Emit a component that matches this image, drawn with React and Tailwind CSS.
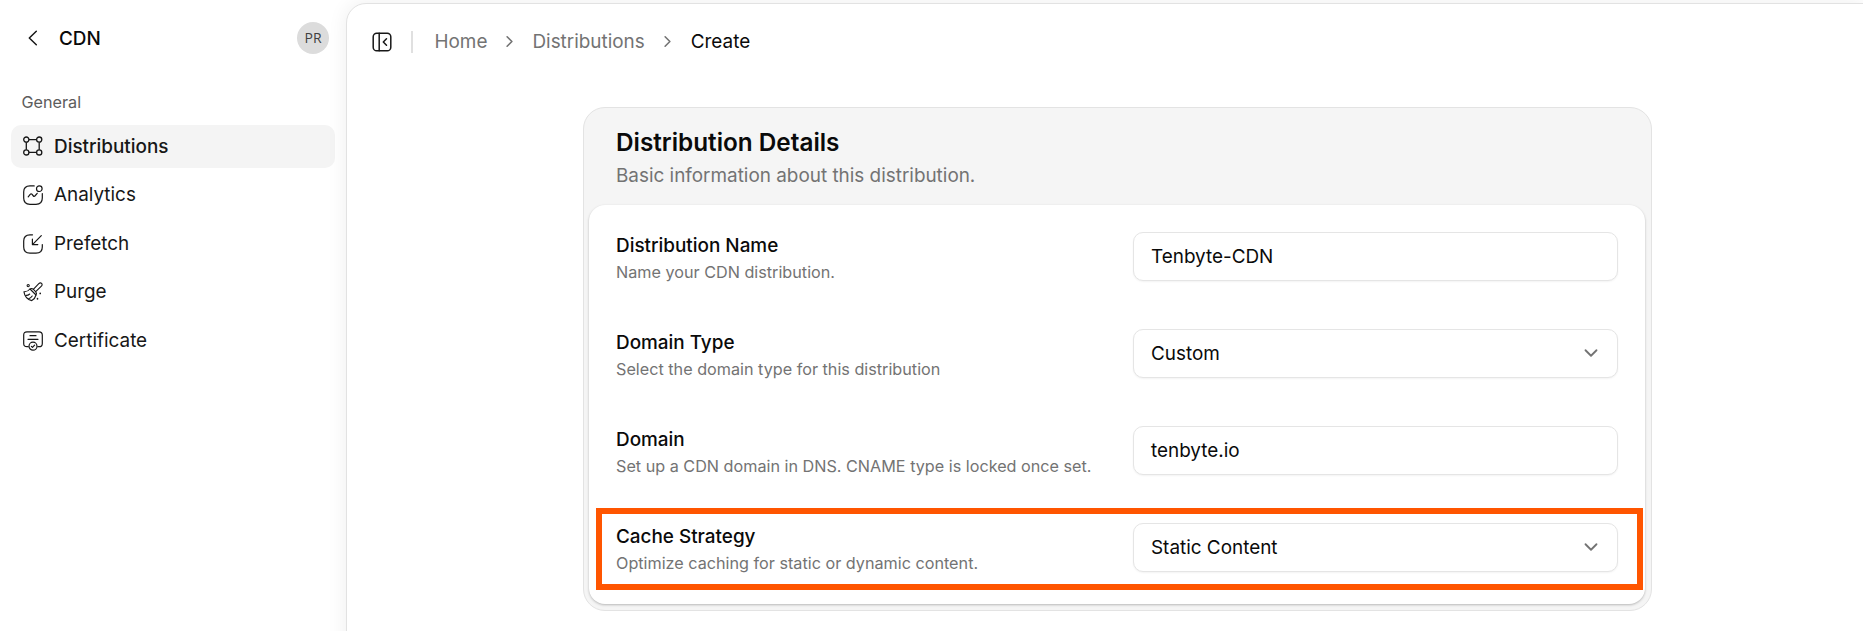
import { ChevronDown, ChevronRight } from "lucide-react";

const DistributionIcon = () => (
  <svg viewBox="0 0 20 20" className="-mt-px size-5 shrink-0" fill="none" stroke="currentColor" strokeWidth="1.3">
    <circle cx="3.3" cy="3.6" r="2.6" />
    <circle cx="16.2" cy="3.6" r="2.6" />
    <circle cx="3.3" cy="16.4" r="2.6" />
    <circle cx="16.2" cy="16.4" r="2.6" />
    <path d="M5.9 3.6h7.7M5.9 16.4h7.7M3.3 6.2v7.6M16.2 6.2v7.6" />
  </svg>
);

const AnalyticsIcon = () => (
  <svg viewBox="0 0 20 20" className="size-5 shrink-0" fill="none" stroke="currentColor" strokeWidth="1.2" strokeLinecap="round" strokeLinejoin="round">
    <path d="M11.2.9H7C2.800.9.7 3 .7 7v6c0 4.200 2.100 6.300 6.300 6.300h6c4.200 0 6.300-2.100 6.300-6.300V8.600" />
    <circle cx="16.3" cy="3.7" r="2.8" />
    <path d="m5.2 11.8 2.2-2.6c.4-.5 1.1-.5 1.5 0l1.5 1.8c.4.5 1.1.5 1.5 0l2.3-2.7" />
  </svg>
);

const PrefetchIcon = () => (
  <svg viewBox="0 0 20 20" className="size-5 shrink-0" fill="none" stroke="currentColor" strokeWidth="1.2" strokeLinecap="round" strokeLinejoin="round">
    <path d="M9.500.8H7C2.800.8.7 2.900.7 7v6c0 4.200 2.100 6.200 6.300 6.200h6c4.200 0 6.300-2 6.300-6.200v-2.500" />
    <path d="M18.300 1.700 9.700 10.300M9.400 5.200v5.400h5.400" />
  </svg>
);

const PurgeIcon = () => (
  <svg viewBox="0 0 20 20" className="size-5 shrink-0" fill="none" stroke="currentColor" strokeWidth="1.1" strokeLinecap="round" strokeLinejoin="round">
    <path d="m10.300 7.300 5.500-5.700c.9-.9 2.100-.9 2.800-.2s.7 1.900-.2 2.800l-5.700 5.500" />
    <path d="M7 7c1.200-.7 2.400-.5 3.400.4l2.200 2.200c1 1 1.200 2.200.4 3.400z" />
    <path d="M7 7C5.300 9 3.200 9.900.9 9.700c.7 4.700 3.300 7.900 7.900 8.900 2.100-1.100 3.600-3.100 4.200-5.600M3.200 13.400c1.400 0 2.500-.5 3.500-1.400M5.700 16.700c1.500-.5 2.700-1.400 3.500-2.700" />
    <circle cx="5.200" cy="3.600" r="1.100" />
    <path d="M17.200 11.400v.1M14.500 16.700v.1" strokeWidth="1.700" />
  </svg>
);

const CertificateIcon = () => (
  <svg viewBox="0 0 20 20" className="size-5 shrink-0" fill="none" stroke="currentColor" strokeWidth="1.2" strokeLinecap="round" strokeLinejoin="round">
    <path d="M5.200 15.700H4c-2.300 0-3.300-1-3.300-3.300V4.100C.7 1.800 1.700.8 4 .8h12c2.300 0 3.300 1 3.300 3.300v8.300c0 2.300-1 3.300-3.300 3.300h-1.200" />
    <path d="M7 4.700h6M5 8.300h10" />
    <circle cx="10" cy="15.200" r="4" />
    <path d="m8.400 15.300 1.100 1.100 2.100-2.200" />
  </svg>
);

const PanelIcon = () => (
  <svg viewBox="0 0 20 20" className="size-5 shrink-0" fill="none" stroke="currentColor" strokeWidth="1.500" strokeLinecap="round" strokeLinejoin="round">
    <rect x="1.200" y="1.200" width="17.600" height="17.600" rx="3.600" />
    <path d="M7.200 1.200v17.600M14.500 6.800 11.300 10l3.200 3.200" />
  </svg>
);

const NAV = [
  { label: "Distributions", Icon: DistributionIcon, active: true },
  { label: "Analytics", Icon: AnalyticsIcon },
  { label: "Prefetch", Icon: PrefetchIcon },
  { label: "Purge", Icon: PurgeIcon },
  { label: "Certificate", Icon: CertificateIcon },
];

const FIELDS = [
  { label: "Distribution Name", hint: "Name your CDN distribution.", value: "Tenbyte-CDN" },
  { label: "Domain Type", hint: "Select the domain type for this distribution", value: "Custom", select: true },
  { label: "Domain", hint: "Set up a CDN domain in DNS. CNAME type is locked once set.", value: "tenbyte.io" },
  { label: "Cache Strategy", hint: "Optimize caching for static or dynamic content.", value: "Static Content", select: true, highlighted: true },
];

function Sidebar() {
  return (
    <aside className="w-[346px] shrink-0 px-[11px]">
      <header className="flex h-[76px] items-center pr-[6px] pl-[17px]">
        <svg viewBox="0 0 10 16" className="h-4 w-2.5" fill="none" stroke="#171717" strokeWidth="1.500" strokeLinecap="round" strokeLinejoin="round">
          <path d="M8.300 1.200 1.300 8l7 6.800" />
        </svg>
        <h1 className="ml-[21px] pt-[2px] text-[18.900px] font-medium text-[#0a0a0a]">CDN</h1>
        <span className="ml-auto flex size-8 items-center justify-center rounded-full bg-[#dcdcdc] pb-px font-['Open_Sans',sans-serif] text-[14px] text-[#404040]">PR</span>
      </header>
      <p className="flex h-[49px] items-center pt-[4px] pl-[10.500px] text-[16.200px] text-[#5c5c5c]">General</p>
      <nav className="flex flex-col gap-[5.500px]">
        {NAV.map(({ label, Icon, active }) => (
          <a key={label} className={`flex h-[43px] items-center gap-[11px] rounded-[10px] pl-3 text-[18.900px] text-[#171717] ${active ? "bg-[#f4f4f4] font-medium" : ""}`}>
            <Icon />
            <span className="pb-px leading-[27px]">{label}</span>
          </a>
        ))}
      </nav>
    </aside>
  );
}

function Breadcrumb() {
  return (
    <div className="flex h-[75px] items-center pl-[25px] text-[18.900px] leading-[27px] text-[#737373]">
      <span className="text-[#171717]"><PanelIcon /></span>
      <span className="ml-[19px] h-[22px] w-[2px] bg-[#e0e0e0]" />
      <span className="ml-[21.500px] pb-px">Home</span>
      <ChevronRight className="mx-[13px] size-[19px]" strokeWidth={2} />
      <span className="pb-px">Distributions</span>
      <ChevronRight className="mx-[13.500px] size-[19px]" strokeWidth={2} />
      <span className="pb-px text-[#0a0a0a]">Create</span>
    </div>
  );
}

function Field({ label, hint, value, select, highlighted }) {
  return (
    <div className="relative flex h-[54px] justify-between">
      <div>
        <div className="text-[18.900px] leading-[27px] font-medium text-[#0a0a0a]">{label}</div>
        <div className="text-[16.200px] leading-[27px] text-[#737373]">{hint}</div>
      </div>
      <div className="flex h-[49px] w-[485px] items-center justify-between rounded-[10px] border border-[#e5e5e5] bg-white pr-[15px] pl-[17px] text-[18.900px] leading-[27px] text-[#0a0a0a] shadow-[0_1px_2px_rgba(0,0,0,0.05)]">
        <span className="pb-px">{value}</span>
        {select && <ChevronDown className="-mt-px size-[22px] text-[#737373]" strokeWidth={2} />}
      </div>
      {highlighted && <div className="absolute -top-[15px] -right-[25px] -left-[20px] h-[82px] border-6 border-[#ff5500]" />}
    </div>
  );
}

export default function App() {
  return (
    <div className="flex h-[631px] w-full overflow-hidden bg-white font-[Inter,sans-serif]">
      <Sidebar />
      <main className="mt-[3px] -mr-px -mb-8 flex-1 rounded-tl-[20px] border border-[#e2e2e2] bg-white shadow-[0_0_20px_rgba(0,0,0,0.07)]">
        <Breadcrumb />
        <section className="mt-[28px] ml-[236px] h-[504px] w-[1069px] rounded-[22px] border border-[#e3e3e3] bg-[#f5f5f5] pr-[6px] pl-[5px]">
          <div className="h-[97px] pt-[20px] pl-[27px]">
            <h2 className="text-[24.300px] leading-[29px] font-semibold text-[#0a0a0a]">Distribution Details</h2>
            <p className="mt-[5px] text-[18.900px] leading-[27px] text-[#737373]">Basic information about this distribution.</p>
          </div>
          <div className="flex h-[399px] flex-col gap-[43px] rounded-[16px] bg-white pt-[27px] pr-[27px] pl-[27px] shadow-[0_1px_3px_rgba(0,0,0,0.16),0_1px_2px_rgba(0,0,0,0.1)]">
            {FIELDS.map((f) => <Field key={f.label} {...f} />)}
          </div>
        </section>
      </main>
    </div>
  );
}
